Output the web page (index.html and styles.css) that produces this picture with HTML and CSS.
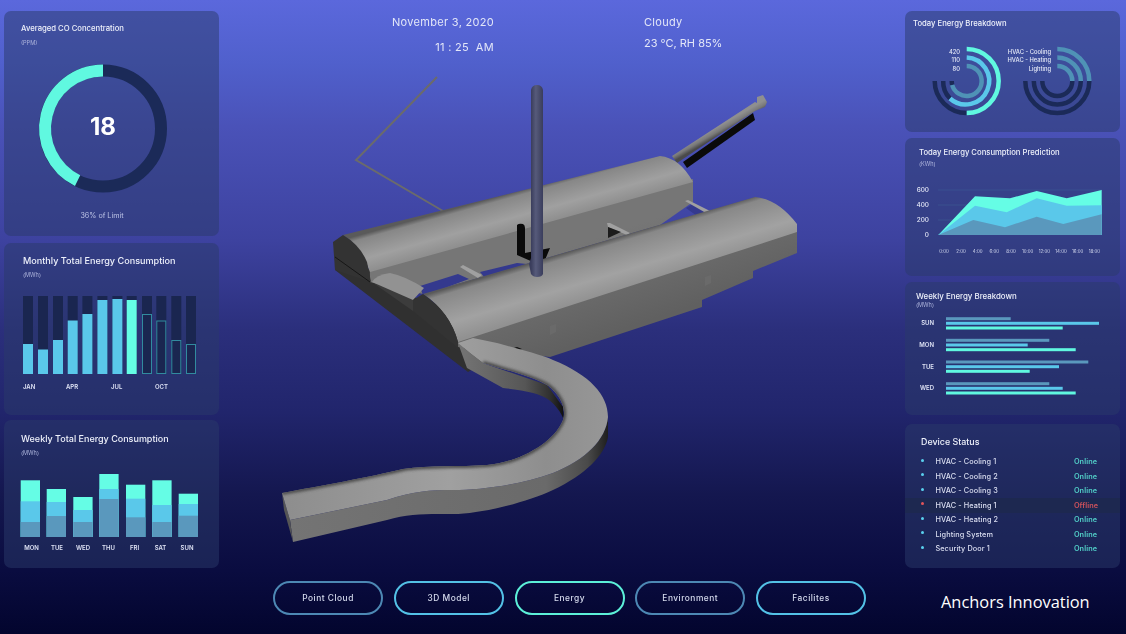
FILE: index.html
```html
<!DOCTYPE html>
<html lang="en">
<head>
<meta charset="utf-8">
<title>Energy Dashboard</title>
<link rel="stylesheet" href="styles.css">
</head>
<body>
<div class="app">
  <aside class="col">
    <section class="card card-co">
      <div class="head"><h2 class="title t-co">Averaged CO Concentration</h2><p class="unit">(PPM)</p></div>
      <svg class="chart" width="215" height="185" viewBox="4 51 215 185">
        <circle cx="103" cy="128.5" r="58" class="donut-track"/>
        <path d="M103 70.5A58 58 0 0 0 77.6 180.6" class="donut-value"/>
        <text x="103" y="135" class="donut-num">18</text>
        <text x="102" y="218" class="donut-note">36% of Limit</text>
      </svg>
    </section>

    <section class="card card-month">
      <div class="head"><h2 class="title t-month">Monthly Total Energy Consumption</h2><p class="unit">(MWh)</p></div>
      <svg class="chart" width="215" height="133" viewBox="4 282 215 133">
        <g class="track">
          <rect x="23" y="296" width="10" height="78"/><rect x="38" y="296" width="10" height="78"/><rect x="53" y="296" width="10" height="78"/><rect x="67.7" y="296" width="10" height="78"/><rect x="82.4" y="296" width="10" height="78"/><rect x="97.4" y="296" width="10" height="78"/><rect x="112.4" y="296" width="10" height="78"/><rect x="126.7" y="296" width="10" height="78"/><rect x="142" y="296" width="10" height="78"/><rect x="156.3" y="296" width="10" height="78"/><rect x="171.3" y="296" width="10" height="78"/><rect x="186" y="296" width="10" height="78"/>
        </g>
        <g class="fill-blue">
          <rect x="23" y="344" width="10" height="30"/><rect x="38" y="349.5" width="10" height="24.5"/><rect x="53" y="340" width="10" height="34"/><rect x="67.7" y="320.5" width="10" height="53.5"/><rect x="82.4" y="314" width="10" height="60"/><rect x="97.4" y="300" width="10" height="74"/><rect x="112.4" y="299" width="10" height="75"/>
        </g>
        <rect class="fill-cyan" x="126.7" y="300" width="10" height="74"/>
        <g class="outlined">
          <rect x="142.5" y="314.5" width="9" height="59"/><rect x="156.8" y="321" width="9" height="52.5"/><rect x="171.8" y="340.5" width="9" height="33"/><rect x="186.5" y="344.5" width="9" height="29"/>
        </g>
        <g class="tick">
          <text x="23" y="388.5">JAN</text><text x="66" y="388.5">APR</text><text x="111" y="388.5">JUL</text><text x="155" y="388.5">OCT</text>
        </g>
      </svg>
    </section>

    <section class="card card-week">
      <div class="head"><h2 class="title t-week">Weekly Total Energy Consumption</h2><p class="unit">(MWh)</p></div>
      <svg class="chart" width="215" height="110" viewBox="4 458 215 110">
        <g class="fill-cyan">
          <rect x="20.7" y="480.3" width="19.3" height="56.7"/><rect x="46.7" y="489" width="19.3" height="48"/><rect x="73.3" y="497" width="19.3" height="40"/><rect x="99.3" y="474" width="19.3" height="63"/><rect x="126" y="484.7" width="19.3" height="52.3"/><rect x="152.3" y="480.3" width="19.3" height="56.7"/><rect x="178.7" y="493.7" width="19.3" height="43.3"/>
        </g>
        <g class="fill-blue">
          <rect x="20.7" y="501.3" width="19.3" height="35.7"/><rect x="46.7" y="502" width="19.3" height="35"/><rect x="73.3" y="510" width="19.3" height="27"/><rect x="99.3" y="489" width="19.3" height="48"/><rect x="126" y="498.7" width="19.3" height="38.3"/><rect x="152.3" y="505" width="19.3" height="32"/><rect x="178.7" y="504" width="19.3" height="33"/>
        </g>
        <g class="fill-steel">
          <rect x="20.7" y="522" width="19.3" height="15"/><rect x="46.7" y="516" width="19.3" height="21"/><rect x="73.3" y="522" width="19.3" height="15"/><rect x="99.3" y="499" width="19.3" height="38"/><rect x="126" y="517.3" width="19.3" height="19.7"/><rect x="152.3" y="522" width="19.3" height="15"/><rect x="178.7" y="515.7" width="19.3" height="21.3"/>
        </g>
        <g class="tick tick-mid">
          <text x="31.5" y="549.5">MON</text><text x="57" y="549.5">TUE</text><text x="83" y="549.5">WED</text><text x="108.5" y="549.5">THU</text><text x="134.5" y="549.5">FRI</text><text x="160.5" y="549.5">SAT</text><text x="187" y="549.5">SUN</text>
        </g>
      </svg>
    </section>
  </aside>

  <main class="center">
    <header class="top">
      <div class="when">
        <p class="top-line">November 3, 2020</p>
        <p class="top-line top-time">11 : 25&nbsp; AM</p>
      </div>
      <div class="weather">
        <p class="top-line">Cloudy</p>
        <p class="top-line top-temp">23 °C, RH 85%</p>
      </div>
    </header>

    <svg class="model" width="686" height="500" viewBox="219 70 686 500">
      <defs>
        <linearGradient id="gTopBack" gradientUnits="userSpaceOnUse" x1="500" y1="196" x2="510" y2="232">
          <stop offset="0" stop-color="#5a5a5a"/><stop offset=".12" stop-color="#878787"/><stop offset=".65" stop-color="#a0a0a0"/><stop offset="1" stop-color="#8f8f8f"/>
        </linearGradient>
        <linearGradient id="gTopFront" gradientUnits="userSpaceOnUse" x1="575" y1="250" x2="590" y2="300">
          <stop offset="0" stop-color="#5a5a5a"/><stop offset=".1" stop-color="#888"/><stop offset=".65" stop-color="#a2a2a2"/><stop offset="1" stop-color="#919191"/>
        </linearGradient>
        <linearGradient id="gSide" gradientUnits="userSpaceOnUse" x1="560" y1="250" x2="590" y2="340">
          <stop offset="0" stop-color="#767676"/><stop offset="1" stop-color="#606060"/>
        </linearGradient>
        <linearGradient id="gSTop" gradientUnits="userSpaceOnUse" x1="290" y1="0" x2="610" y2="0">
          <stop offset="0" stop-color="#8e8e8e"/><stop offset=".5" stop-color="#a0a0a0"/><stop offset=".8" stop-color="#8e8e8e"/><stop offset="1" stop-color="#979797"/>
        </linearGradient>
        <linearGradient id="gSSide" gradientUnits="userSpaceOnUse" x1="290" y1="0" x2="610" y2="0">
          <stop offset="0" stop-color="#747474"/><stop offset=".8" stop-color="#6a6a6a"/><stop offset=".93" stop-color="#4a4a4a"/><stop offset="1" stop-color="#1a1a1a"/>
        </linearGradient>
        <linearGradient id="gWall" gradientUnits="userSpaceOnUse" x1="465" y1="0" x2="565" y2="0">
          <stop offset="0" stop-color="#727272"/><stop offset=".6" stop-color="#565656"/><stop offset=".85" stop-color="#303030"/><stop offset="1" stop-color="#0c0c0c"/>
        </linearGradient>
        <linearGradient id="gPole" gradientUnits="userSpaceOnUse" x1="531" y1="0" x2="543" y2="0">
          <stop offset="0" stop-color="#3a3d5c"/><stop offset=".4" stop-color="#565a7a"/><stop offset="1" stop-color="#3a3d5c"/>
        </linearGradient>
        <linearGradient id="gPipe" gradientUnits="userSpaceOnUse" x1="714" y1="129" x2="718" y2="136">
          <stop offset="0" stop-color="#8f8f8f"/><stop offset=".5" stop-color="#7a7a7a"/><stop offset="1" stop-color="#4a4a4a"/>
        </linearGradient>
        <filter id="soft" x="-10%" y="-10%" width="120%" height="120%"><feGaussianBlur stdDeviation="1.6"/></filter>
        <clipPath id="sClip">
          <path d="M282 493C320 486 370 477 403 469C430 465 460 467 487 465C515 463 553 445 563 420C568 405 555 390 547 385C530 375 505 370 483 363L470 353L458 343L473 338L497 343C510 347 540 354 553 360C590 375 608 395 608 417C606 440 585 460 553 473C520 485 480 490 453 490C430 490 413 491 387 500L290 520Z"/>
        </clipPath>
      </defs>

      <polyline points="437,77 356,160 443,211" class="wire"/>

      <polygon points="683,162 753,113 755,120 687,168" fill="#0a0a0a"/>
      <path d="M672 156L755 102L757 103L757 97L763 95L767 102L765 107L755 111L677 163Z" fill="url(#gPipe)"/>

      <path d="M335 257L335 270L468 372L500 352L440 305L413 297L370 278Z" fill="#303030"/>
      <polygon points="335,256 413,311 413,300 345,252" fill="#3c3c3c"/>

      <polygon points="370,268 693,179 693,202 660,225 423,294 370,282" fill="url(#gSide)"/>
      <polygon points="420,286 458,274 469,279 423,296" class="gap"/>
      <polygon points="480,272 517,263 527,264 485,278" class="gap"/>
      <polygon points="686,208 693,204 706,213 697,216" class="gap"/>

      <polygon points="460,267 463,265 482,275 478,278" fill="#a0a0a0"/>
      <polygon points="607,223 610,223 630,233 627,235 608,227" fill="#a0a0a0"/>
      <polygon points="608,227 621,232 608,238" fill="#1c1c1c"/>
      <polygon points="685,201 688,200 710,211 706,213" fill="#a0a0a0"/>

      <path d="M343 235L660 156Q680 158 693 182L370 272Q360 245 343 235Z" fill="url(#gTopBack)"/>
      <path d="M333 242L343 235Q360 245 367 262L371 282L335 270Z" fill="#333"/>
      <line x1="335" y1="257" x2="370" y2="282" class="seam"/>

      <path d="M517 225Q519 223 523 224Q525 225 525 228L525 253L550 248L545 260L533 262L517 255Z" fill="#0a0a0a"/>

      <path d="M372 282Q376 275 390 273Q405 276 424 288L413 300Z" fill="#929292"/>

      <path d="M458 338L797 228L797 253L753 271L753 278L702 300L702 307L550 357L458 347Z" fill="url(#gSide)"/>
      <polygon points="550,326 556,324 556,332 550,335" fill="#6a6a6a"/>
      <polygon points="705,277 711,275 711,283 705,286" fill="#6a6a6a"/>
      <path d="M423 294L755 197Q778 199 797 224L797 232L458 342Q450 312 423 294Z" fill="url(#gTopFront)"/>
      <path d="M413 300L423 294Q450 312 458 342L458 348L413 311Z" fill="#333"/>
      <path d="M500 352L517 347L522 349L503 355Z" fill="#0f0f0f"/>

      <path d="M458 343L467 368L503 388C515 389 525 391 533 393C545 396 552 401 557 408C561 413 563 417 564 421L563 407L547 385L483 363L470 353Z" fill="url(#gWall)"/>
      <path d="M608 417L608 437C605 455 585 475 553 490C525 503 480 514 453 514C430 514 410 513 387 520L293 542L290 520L387 500C413 491 430 490 453 490C480 490 520 485 553 473C585 460 606 440 608 417Z" fill="url(#gSSide)"/>
      <path d="M282 493L290 520L293 542L284 510Z" fill="#555"/>
      <path d="M282 493C320 486 370 477 403 469C430 465 460 467 487 465C515 463 553 445 563 420C568 405 555 390 547 385C530 375 505 370 483 363L470 353L458 343L473 338L497 343C510 347 540 354 553 360C590 375 608 395 608 417C606 440 585 460 553 473C520 485 480 490 453 490C430 490 413 491 387 500L290 520Z" fill="url(#gSTop)"/>
      <g clip-path="url(#sClip)">
        <path d="M282 493C320 486 370 477 403 469C430 465 460 467 487 465C515 463 553 445 563 420C568 405 555 390 547 385C530 375 505 370 483 363" class="shade" filter="url(#soft)"/>
      </g>

      <path d="M531 90Q532 85 537 85Q542 85 543 90L543 274Q542 277 537 277Q533 277 531 274L529 264L531 258Z" fill="url(#gPole)"/>
    </svg>

    <nav class="nav">
      <button class="pill pill-steel">Point Cloud</button>
      <button class="pill pill-blue">3D Model</button>
      <button class="pill pill-cyan">Energy</button>
      <button class="pill pill-steel">Environment</button>
      <button class="pill pill-blue">Facilites</button>
    </nav>
  </main>

  <aside class="col">
    <section class="card card-today">
      <div class="head"><h2 class="title t-today">Today Energy Breakdown</h2></div>
      <svg class="chart" width="215" height="92" viewBox="905 40 215 92">
        <g class="ring">
          <path d="M966.7 113A32 32 0 0 1 934.7 81" class="ring-dark"/>
          <path d="M950 98.5A23.5 23.5 0 0 1 943.2 81" class="ring-dark"/>
          <path d="M952.2 85A15 15 0 0 1 951.7 81" class="ring-dark"/>
          <path d="M966.7 49A32 32 0 0 1 966.7 113" class="ring-cyan"/>
          <path d="M966.7 57.5A23.5 23.5 0 1 1 950 98.5" class="ring-blue"/>
          <path d="M966.7 66A15 15 0 1 1 952.2 85" class="ring-steel"/>

          <path d="M1057.3 49A32 32 0 0 1 1089.3 81" class="ring-steel"/>
          <path d="M1057.3 57.5A23.5 23.5 0 0 1 1080.8 81" class="ring-steel"/>
          <path d="M1057.3 66A15 15 0 0 1 1072.3 81" class="ring-steel"/>
          <path d="M1025.3 81A32 32 0 0 0 1089.3 81" class="ring-dark"/>
          <path d="M1033.8 81A23.5 23.5 0 0 0 1080.8 81" class="ring-dark"/>
          <path d="M1042.3 81A15 15 0 0 0 1072.3 81" class="ring-dark"/>
        </g>
        <g class="ring-label">
          <text x="960" y="54">420</text><text x="960" y="61.5">110</text><text x="960" y="71">80</text>
          <text x="1051" y="54">HVAC - Cooling</text><text x="1051" y="61.5">HVAC - Heating</text><text x="1051" y="71">Lighting</text>
        </g>
      </svg>
    </section>

    <section class="card card-pred">
      <div class="head"><h2 class="title t-pred">Today Energy Consumption Prediction</h2><p class="unit">(KWh)</p></div>
      <svg class="chart" width="215" height="109" viewBox="905 167 215 109">
        <g class="grid">
          <line x1="938" y1="190" x2="1102" y2="190"/><line x1="938" y1="205" x2="1102" y2="205"/><line x1="938" y1="220" x2="1102" y2="220"/>
        </g>
        <polygon class="fill-cyan" points="938.3,235 975,196.3 1010,198.3 1036.7,191 1066.7,198.3 1101.7,190 1101.7,235"/>
        <polygon class="fill-blue" points="938.3,235 975,205.7 1006.7,212.3 1036.7,198.3 1066.7,205.7 1101.7,205.3 1101.7,235"/>
        <polygon class="fill-steel" points="938.3,235 973.3,220 1005,227.3 1036.7,216.7 1063.3,224 1101.7,214.3 1101.7,235"/>
        <g class="axis-y">
          <text x="929" y="192">600</text><text x="929" y="207">400</text><text x="929" y="222">200</text><text x="929" y="236.5">0</text>
        </g>
        <g class="axis-x">
          <text x="944" y="252.5">0:00</text><text x="961" y="252.5">2:00</text><text x="977.7" y="252.5">4:00</text><text x="994.3" y="252.5">6:00</text><text x="1011" y="252.5">8:00</text><text x="1027.7" y="252.5">10:00</text><text x="1044.3" y="252.5">12:00</text><text x="1061" y="252.5">14:00</text><text x="1077.7" y="252.5">16:00</text><text x="1094.3" y="252.5">18:00</text>
        </g>
      </svg>
    </section>

    <section class="card card-wbreak">
      <div class="head"><h2 class="title t-wbreak">Weekly Energy Breakdown</h2><p class="unit unit-tight">(MWh)</p></div>
      <svg class="chart" width="215" height="103" viewBox="905 312 215 103">
        <g class="hbar-steel">
          <rect x="946" y="317.2" width="64.7" height="3"/><rect x="946" y="338.8" width="103.3" height="3"/><rect x="946" y="360.5" width="142.3" height="3"/><rect x="946" y="382.2" width="103.3" height="3"/>
        </g>
        <g class="hbar-blue">
          <rect x="946" y="321.8" width="153" height="3"/><rect x="946" y="343.5" width="81.7" height="3"/><rect x="946" y="365.2" width="113" height="3"/><rect x="946" y="386.8" width="116.7" height="3"/>
        </g>
        <g class="hbar-cyan">
          <rect x="946" y="326.5" width="116.7" height="3"/><rect x="946" y="348.2" width="129.7" height="3"/><rect x="946" y="369.8" width="83.7" height="3"/><rect x="946" y="391.5" width="129.7" height="3"/>
        </g>
        <g class="tick tick-end">
          <text x="934" y="325">SUN</text><text x="934" y="346.5">MON</text><text x="934" y="368.5">TUE</text><text x="934" y="390">WED</text>
        </g>
      </svg>
    </section>

    <section class="card card-device">
      <h2 class="title t-device">Device Status</h2>
      <ul class="devices">
        <li class="device"><span class="dot"></span><span class="device-name">HVAC - Cooling 1</span><span class="status">Online</span></li>
        <li class="device"><span class="dot"></span><span class="device-name">HVAC - Cooling 2</span><span class="status">Online</span></li>
        <li class="device"><span class="dot"></span><span class="device-name">HVAC - Cooling 3</span><span class="status">Online</span></li>
        <li class="device device-off"><span class="dot"></span><span class="device-name">HVAC - Heating 1</span><span class="status">Offline</span></li>
        <li class="device"><span class="dot"></span><span class="device-name">HVAC - Heating 2</span><span class="status">Online</span></li>
        <li class="device"><span class="dot"></span><span class="device-name">Lighting System</span><span class="status">Online</span></li>
        <li class="device"><span class="dot"></span><span class="device-name">Security Door 1</span><span class="status">Online</span></li>
      </ul>
    </section>

    <p class="brand">Anchors Innovation</p>
  </aside>
</div>
</body>
</html>
```
FILE: styles.css
```css
* { box-sizing: border-box; margin: 0; padding: 0; }

html, body { width: 1126px; height: 634px; overflow: hidden; }

body {
  font-family: Inter, "Open Sans", "Liberation Sans", sans-serif;
  background: linear-gradient(180deg, #5b68dc 0%, #5060cc 10%, #4a52b8 20%, #3d429f 38%, #2b2f7c 52%, #21256c 65%, #14174f 78%, #0a0c40 90%, #03052e 100%);
  color: #e6eaf8;
}

.app {
  display: grid;
  grid-template-columns: 215px 686px 215px;
  height: 634px;
  padding: 11px 6px 0 4px;
}

.col { display: flex; flex-direction: column; }

.card {
  background: rgba(42, 58, 105, 0.5);
  border-radius: 7px;
  overflow: hidden;
  flex: none;
}
.card > *, .top, .nav, .model { filter: blur(0.3px); }

.card-co { height: 225px; margin-bottom: 7px; }
.card-month { height: 172px; margin-bottom: 5px; }
.card-week { height: 148px; }
.card-today { height: 121px; margin-bottom: 6px; }
.card-pred { height: 138px; margin-bottom: 6px; }
.card-wbreak { height: 133px; margin-bottom: 9px; }
.card-device { height: 144px; }

.head { display: block; }
.card-co .head { height: 40px; padding: 13px 0 0 17px; }
.card-month .head { height: 39px; padding: 13px 0 0 19px; }
.card-week .head { height: 38px; padding: 14px 0 0 17px; }
.card-today .head { height: 29px; padding: 8px 0 0 8px; }
.card-pred .head { height: 29px; padding: 10px 0 0 14px; }
.card-wbreak .head { height: 30px; padding: 9px 0 0 11px; }

.title {
  font-weight: 500;
  line-height: 10px;
  color: #eef1fb;
  white-space: nowrap;
}
.t-co { font-size: 7.7px; }
.t-month { font-size: 9.1px; }
.t-week { font-size: 9px; }
.t-today { font-size: 7.7px; }
.t-pred { font-size: 7.7px; }
.t-wbreak { font-size: 7.9px; }
.t-device { font-size: 8.9px; padding: 13px 0 0 16px; }

.unit {
  font-size: 5.6px;
  line-height: 8px;
  margin-top: 5px;
  color: #aeb5dc;
}
.card-pred .unit { margin-top: 2px; }
.unit-tight { margin-top: 0; }

.chart { display: block; }

.donut-track { fill: none; stroke: #1b2a58; stroke-width: 12; }
.donut-value { fill: none; stroke: #60f8e0; stroke-width: 12; }
.donut-num { font-size: 24px; font-weight: 700; fill: #fff; text-anchor: middle; }
.donut-note { font-size: 7.2px; fill: #bcc3e6; text-anchor: middle; }

.track rect { fill: #1a2650; }
.fill-blue rect, polygon.fill-blue { fill: #5ac8ea; }
.fill-cyan rect, rect.fill-cyan, polygon.fill-cyan { fill: #65fde5; }
.fill-steel rect, polygon.fill-steel { fill: #5a98bd; }
.outlined rect { fill: #1a2650; stroke: #318b9f; stroke-width: 1; }

.tick text { font-size: 6px; font-weight: 600; fill: #dfe3f5; }
.tick-mid text { text-anchor: middle; }
.tick-end text { text-anchor: end; }

.ring path { fill: none; stroke-width: 4.5; }
.ring-dark { stroke: #1b2a58; }
.ring-cyan { stroke: #60f8e0; }
.ring-blue { stroke: #5ac8ea; }
.ring-steel { stroke: #4f92b6; }
.ring-label text { font-size: 5.8px; font-weight: 500; fill: #e6eaf8; text-anchor: end; }

.grid line { stroke: #3e5c96; stroke-width: 0.6; }
.axis-y text { font-size: 6.4px; font-weight: 500; fill: #e6eaf8; text-anchor: end; }
.axis-x text { font-size: 4.4px; fill: #d6dbf0; text-anchor: middle; }

.hbar-steel rect { fill: #5a98bd; }
.hbar-blue rect { fill: #5ac8ea; }
.hbar-cyan rect { fill: #60f8e0; }

.devices { list-style: none; margin-top: 7.5px; }
.device {
  display: flex;
  align-items: center;
  height: 14.5px;
  font-size: 7.3px;
  font-weight: 500;
  letter-spacing: 0.1px;
}
.dot {
  width: 3.4px;
  height: 3.4px;
  border-radius: 50%;
  background: #5ad0ee;
  margin: -3px 0 0 15.5px;
  flex: none;
}
.device-name { margin-left: 11.5px; width: 138.5px; color: #d9ddf0; }
.status { color: #52cfc8; font-weight: 600; }
.device-off { background: #1d2850; }
.device-off .dot { background: #e2545a; }
.device-off .status { color: #d0525c; }

.center { display: flex; flex-direction: column; }

.top {
  height: 59px;
  display: flex;
  color: #e3e7f8;
  font-size: 11px;
  letter-spacing: 0.3px;
}
.when { width: 275px; text-align: right; }
.weather { margin-left: 150px; }
.top-line { line-height: 14px; white-space: nowrap; }
.top-line:first-child { margin-top: 4px; }
.top-time { margin-top: 11px; }
.top-temp { margin-top: 7px; letter-spacing: 0; }

.model { display: block; flex: none; }

.wire { fill: none; stroke: #6b6b6b; stroke-width: 2; }
.gap { fill: #34398e; }
.seam { stroke: #161616; stroke-width: 1; }
.shade { fill: none; stroke: #474747; stroke-width: 4; }

.nav {
  display: flex;
  gap: 10.75px;
  margin: 11px 0 0 54px;
}
.pill {
  width: 110px;
  height: 34px;
  border-radius: 17px;
  background: transparent;
  border: 2px solid;
  font-family: inherit;
  font-size: 8.4px;
  font-weight: 500;
  letter-spacing: 0.5px;
  color: #d6dbee;
}
.pill-steel { border-color: #4d88b4; }
.pill-blue { border-color: #53c1e6; }
.pill-cyan { border-color: #5cf0d8; }

.brand {
  font-family: "Open Sans", "Noto Sans", sans-serif;
  font-size: 16.4px;
  line-height: 22px;
  color: #fff;
  margin: 23px 0 0 36px;
  white-space: nowrap;
}
```
